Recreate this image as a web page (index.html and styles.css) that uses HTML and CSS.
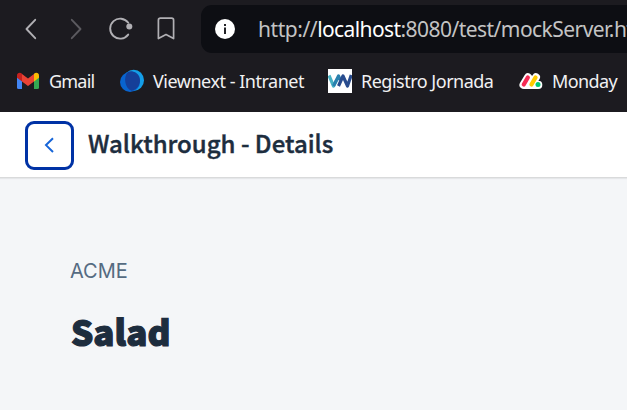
FILE: index.html
```
<!DOCTYPE html>
<html lang="en">
<head>
<meta charset="utf-8">
<title>Walkthrough - Details</title>
<link rel="stylesheet" href="styles.css">
</head>
<body>
<div class="browser">
  <div class="toolbar">
    <svg class="nav-icons" width="201" height="58" viewBox="0 0 201 58" fill="none" stroke="#b1b0b4" stroke-width="1.9" stroke-linecap="round" stroke-linejoin="round">
      <path d="M35.200 19.800 26.500 29l8.700 9.200"/>
      <path d="m71.800 19.800 8.700 9.200-8.700 9.200" stroke="#5b5a5f"/>
      <path d="M128.200 34.600a10 10 0 1 1 .1-11.800"/>
      <circle cx="129.300" cy="26.500" r="3" fill="#b1b0b4" stroke="none"/>
      <path d="M160.400 18.200h11.200q2 0 2 2v18.400l-7.600-4-7.600 4V20.200q0-2 2-2Z" stroke-width="1.700"/>
    </svg>
    <div class="address">
      <svg class="info" width="20" height="20" viewBox="0 0 20 20"><circle cx="10" cy="10" r="10" fill="#fff"/><path d="M9 5h2v2H9zM9 8.500h2V15H9z" fill="#222226"/></svg>
      <div class="url"><span class="scheme">http://</span><span class="host">localhost</span><span class="path">:8080/test/mockServer.html</span></div>
    </div>
  </div>
  <div class="bookmarks">
    <div class="bookmark gmail">
      <svg width="24" height="24" viewBox="0 0 24 24"><path d="M1 8v10.500q0 1.500 1.500 1.500H6v-9z" fill="#4285f4"/><path d="M18 11v9h3.500q1.500 0 1.500-1.500V8z" fill="#34a853"/><path d="M6 5v7.500L12 17l6-4.500V5L12 9.500z" fill="#ea4335"/><path d="M1 8v-1.500C1 3.800 4 3 6 4.700v7.800L1 8.800z" fill="#c5221f"/><path d="M18 4.700c2-1.700 5-.9 5 1.800v2.300l-5 3.700z" fill="#fbbc04"/></svg>
      <span>Gmail</span>
    </div>
    <div class="bookmark intranet">
      <svg width="24" height="24" viewBox="0 0 24 24"><ellipse cx="13.700" cy="11.300" rx="10.300" ry="10.600" fill="#149ee8"/><ellipse cx="10" cy="13" rx="10" ry="10" fill="#0864cf"/><path d="M7.400 3.400C3.500 8 4.500 19 11.600 21.700 22 20 23 5 13.500 2.800 11 2 9 2.400 7.400 3.400Z" fill="#153f99"/></svg>
      <span>Viewnext - Intranet</span>
    </div>
    <div class="bookmark registro">
      <svg width="24" height="24" viewBox="0 0 24 24"><path fill="#fff" d="M0 0h24v24H0z"/><g fill="none" stroke-width="3.200" stroke-linejoin="round"><path d="M1 6.500 5.500 17l3-5.500" stroke="#48b2c4"/><path d="M5.500 17 10.500 7l1.700 4" stroke="#2a80ae"/><path d="m10.500 17 4.500-10 4.500 10 3.800-11" stroke="#294c8e"/></g></svg>
      <span>Registro Jornada</span>
    </div>
    <div class="bookmark monday">
      <svg width="24" height="24" viewBox="0 0 24 24" fill="none" stroke-linecap="round"><g stroke="#fff" stroke-width="8"><path d="m4.500 15.800 4.500-7.600M12.500 15.800 17 8.200M19.300 16v-.2M5 16h14"/></g><g stroke-width="4.100"><path d="m4.700 15.600 4.200-7.200" stroke="#f62b54"/><path d="m12.400 15.600 4.200-7.200" stroke="#ffcc00"/></g><circle cx="19" cy="15.600" r="2.500" fill="#00ca72"/></svg>
      <span>Monday</span>
    </div>
  </div>
</div>
<header class="page-header">
  <button class="back" aria-label="Back"><svg width="20" height="20" viewBox="0 0 20 20" fill="none" stroke="#1665d8" stroke-width="2"><path d="m13 2.200-7 6.900 7 6.900"/></svg></button>
  <h1>Walkthrough - Details</h1>
</header>
<main>
  <p>ACME</p>
  <h2>Salad</h2>
</main>
</body>
</html>
```
FILE: styles.css
```
* { box-sizing: border-box; }
body { margin: 0; height: 410px; overflow: hidden; background: #f4f6f8; font-family: "Noto Sans", sans-serif; }
svg { display: block; flex: none; }
.browser { height: 112px; background: #1c1b20; overflow: hidden; }
.toolbar { display: flex; height: 58px; }
.address { display: flex; align-items: center; flex: 1; min-width: 0; height: 48px; margin-top: 5px; padding-left: 14px; border-radius: 11px 0 0 11px; background: #0d0e13; overflow: hidden; }
.url { margin-left: 23px; font-size: 21px; line-height: 30px; color: #c3c3c4; white-space: nowrap; }
.scheme { letter-spacing: -.45px; }
.host { color: #fff; letter-spacing: -.6px; }
.path { letter-spacing: -.55px; }
.bookmarks { display: flex; height: 46px; align-items: center; padding-left: 16px; color: #f1f1f2; font-size: 18px; line-height: 26px; white-space: nowrap; }
.bookmark { display: flex; align-items: center; gap: 9px; flex: none; }
.gmail { width: 104px; letter-spacing: -.8px; }
.intranet { width: 208px; letter-spacing: -.48px; }
.registro { width: 191px; letter-spacing: -.5px; }
.monday { letter-spacing: -.6px; }
.page-header { display: flex; align-items: center; height: 66px; padding: 1px 0 0 25px; background: #fff; border-bottom: 1px solid #d9dadb; box-shadow: 0 1px 1px #e5e7e9; }
.back { display: flex; align-items: center; justify-content: center; width: 49px; height: 49px; padding: 0; margin-top: 1px; border: 3px solid #0032a5; border-radius: 9px; background: #fff; }
h1 { margin: -4px 0 0 14px; color: #1d2d3e; font: 500 24px/32px "Noto Sans CJK SC", sans-serif; -webkit-text-stroke: .4px #1d2d3e; white-space: nowrap; }
main { padding: 79px 0 0 70px; }
p { margin: 0; color: #556b82; font: 20px/28px Inter, sans-serif; }
h2 { margin: 21px 0 0 1px; color: #1d2d3e; font: 900 35px/50px "Noto Sans CJK SC", sans-serif; -webkit-text-stroke: 1.2px #1d2d3e; }
```
